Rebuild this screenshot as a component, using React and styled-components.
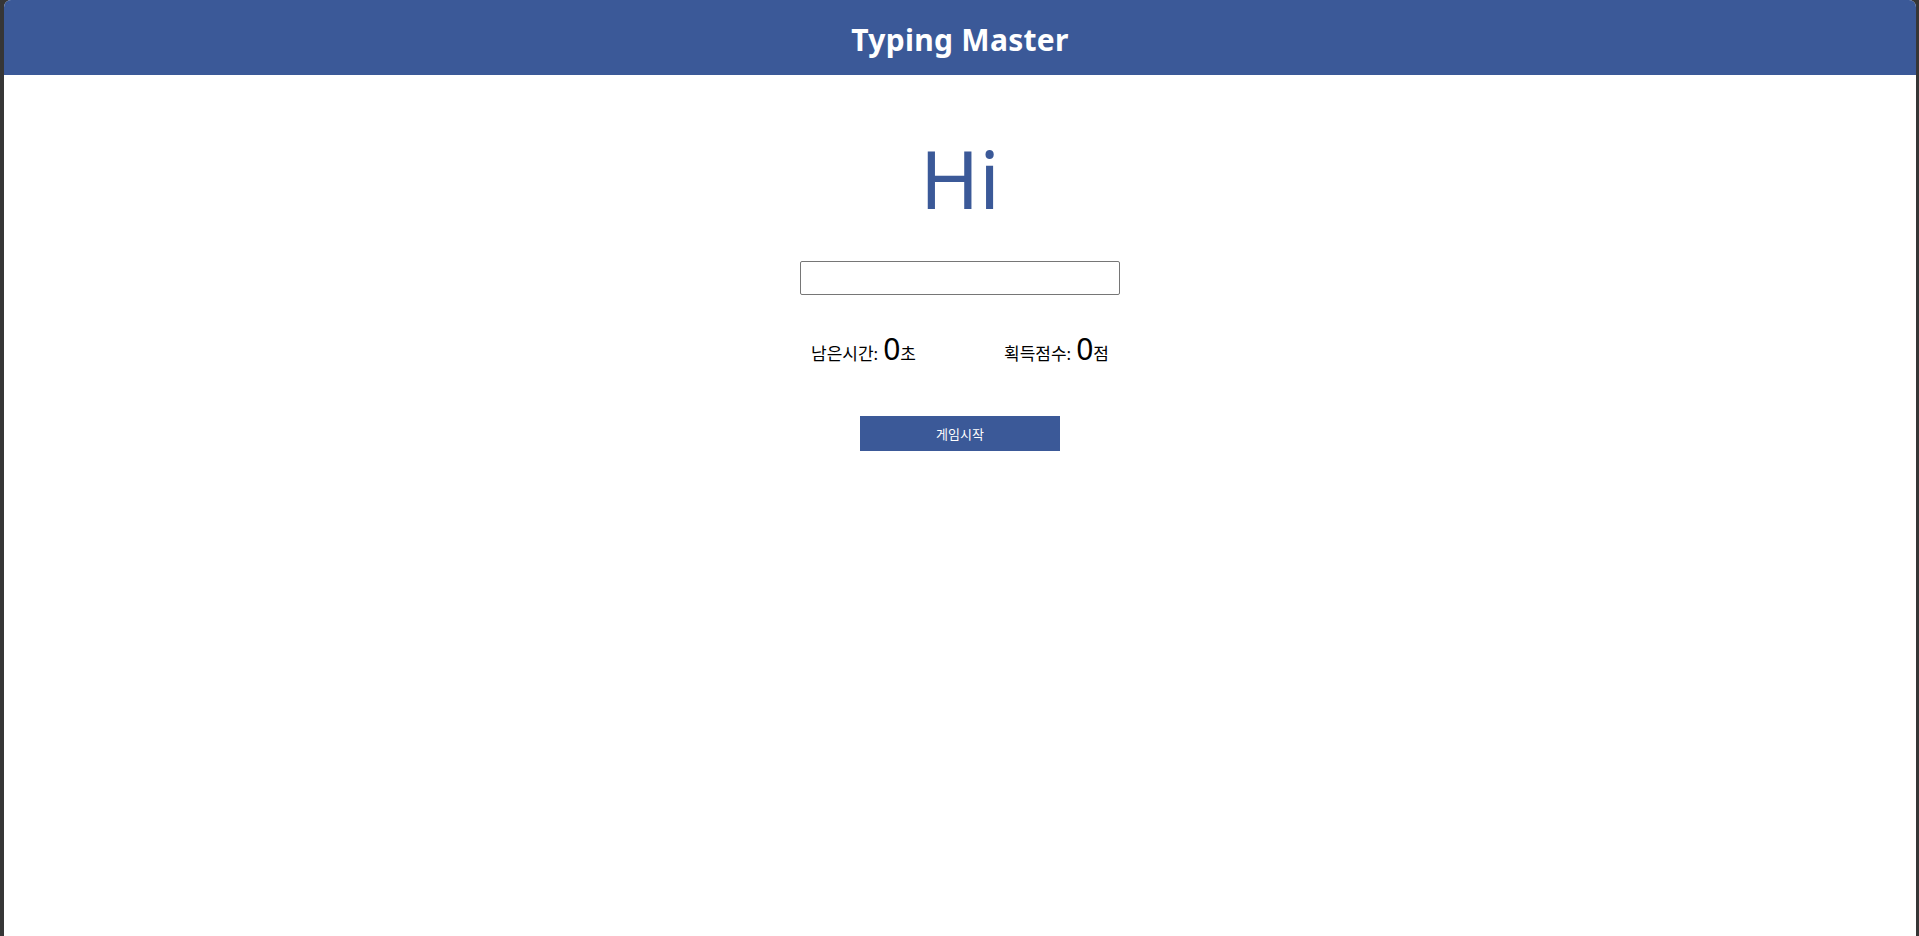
import React from "react";
import styled, { createGlobalStyle } from "styled-components";

const GlobalStyle = createGlobalStyle`
  html, body {
    margin: 0;
    padding: 0;
    height: 100%;
    background: #363636;
  }
  #root {
    min-height: 100%;
  }
  * { box-sizing: border-box; }
`;

const Frame = styled.div`
  margin: 0 3px 0 4px;
  min-height: 100vh;
  background: #ffffff;
  border-radius: 7px 7px 0 0;
  overflow: hidden;
  font-family: "Noto Sans", "Noto Sans CJK KR", sans-serif;
  display: flex;
  flex-direction: column;
`;

const Header = styled.header`
  height: 75px;
  background: #3b5998;
  display: flex;
  align-items: center;
  justify-content: center;
`;

const Title = styled.h1`
  margin: 0;
  color: #ffffff;
  font-size: 30px;
  font-weight: 700;
  line-height: 1;
  padding-top: 5px;
  letter-spacing: 0.3px;
`;

const Main = styled.main`
  display: flex;
  flex-direction: column;
  align-items: center;
  padding-top: 63px;
`;

const Word = styled.div`
  color: #3b5998;
  font-size: 80px;
  line-height: 80px;
  font-weight: 400;
  height: 80px;
`;

const Input = styled.input`
  margin-top: 43px;
  width: 320px;
  height: 34px;
  border: 1px solid #767676;
  border-radius: 2px;
  padding: 0 6px;
  font-size: 16px;
  outline: none;
`;

const Stats = styled.div`
  margin-top: 39px;
  display: flex;
  gap: 88px;
  align-items: baseline;
  height: 30px;
`;

const Stat = styled.div`
  display: flex;
  align-items: baseline;
  font-size: 17px;
  line-height: 30px;
  color: #000000;
`;

const Label = styled.span`
  margin-right: 5px;
`;

const Num = styled.span`
  font-size: 30px;
  line-height: 30px;
`;

const Button = styled.button`
  margin-top: 52px;
  width: 200px;
  height: 35px;
  border: none;
  background: #3b5998;
  color: #ffffff;
  font-family: "Noto Sans", "Noto Sans CJK KR", sans-serif;
  font-size: 13px;
  cursor: pointer;
`;

export default function App() {
  return (
    <>
      <GlobalStyle />
      <Frame>
        <Header>
          <Title>Typing Master</Title>
        </Header>
        <Main>
          <Word>Hi</Word>
          <Input type="text" />
          <Stats>
            <Stat>
              <Label>남은시간:</Label>
              <Num>0</Num>초
            </Stat>
            <Stat>
              <Label>획득점수:</Label>
              <Num>0</Num>점
            </Stat>
          </Stats>
          <Button>게임시작</Button>
        </Main>
      </Frame>
    </>
  );
}
